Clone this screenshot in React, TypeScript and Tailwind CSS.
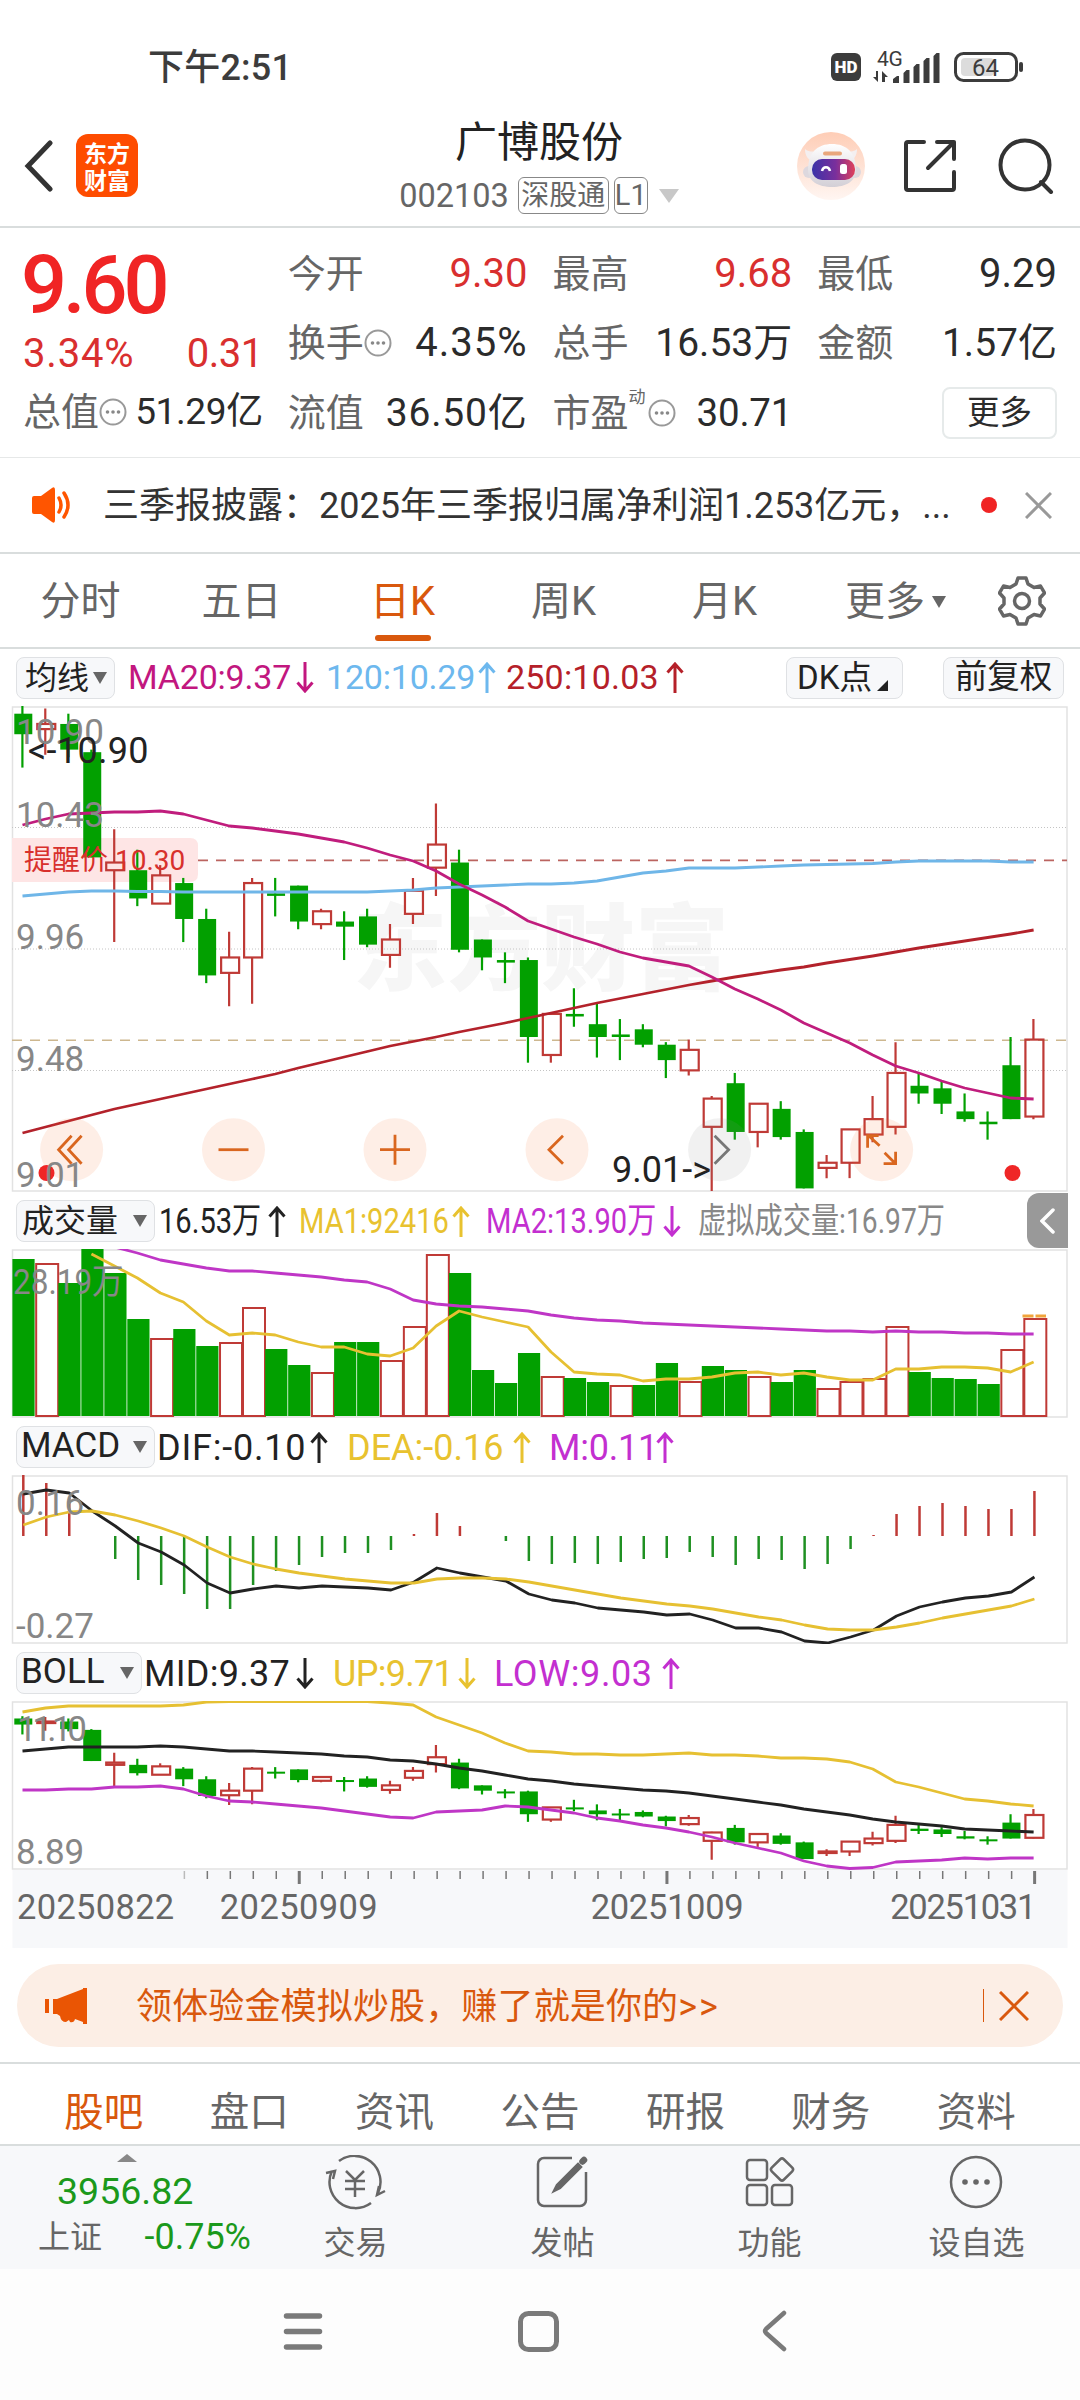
import type { ReactNode } from "react";
import clsx from "clsx";

const UP = "#bf3a36";
const DOWN = "#02a000";
const STEP = 22.98;

const xAt = (i: number) => 22.5 + i * STEP;

// open-side/close-side prices per day: [high, body top, body bottom, low, isUp]
const candles: [number, number, number, number, number][] = [
  [10.9, 10.87, 10.79, 10.66, 0],
  [10.89, 10.83, 10.81, 10.71, 1],
  [10.87, 10.83, 10.73, 10.7, 0],
  [10.73, 10.72, 10.31, 10.31, 0],
  [10.42, 10.29, 10.26, 9.98, 1],
  [10.34, 10.26, 10.15, 10.12, 0],
  [10.28, 10.24, 10.13, 10.13, 1],
  [10.23, 10.21, 10.07, 9.98, 0],
  [10.11, 10.07, 9.85, 9.82, 0],
  [10.02, 9.92, 9.86, 9.73, 1],
  [10.23, 10.21, 9.92, 9.74, 1],
  [10.23, 10.17, 10.16, 10.08, 0],
  [10.2, 10.2, 10.06, 10.03, 0],
  [10.11, 10.1, 10.05, 10.03, 1],
  [10.1, 10.06, 10.04, 9.91, 0],
  [10.11, 10.08, 9.97, 9.96, 0],
  [10.05, 9.99, 9.93, 9.88, 1],
  [10.23, 10.18, 10.09, 10.05, 1],
  [10.52, 10.36, 10.27, 10.16, 1],
  [10.34, 10.29, 9.95, 9.94, 0],
  [9.99, 9.99, 9.92, 9.87, 0],
  [9.94, 9.91, 9.9, 9.82, 0],
  [9.92, 9.91, 9.61, 9.51, 0],
  [9.7, 9.7, 9.54, 9.51, 1],
  [9.8, 9.7, 9.69, 9.65, 0],
  [9.74, 9.66, 9.61, 9.53, 0],
  [9.68, 9.62, 9.61, 9.52, 0],
  [9.66, 9.64, 9.58, 9.57, 0],
  [9.59, 9.58, 9.52, 9.45, 0],
  [9.6, 9.56, 9.48, 9.46, 1],
  [9.38, 9.37, 9.26, 9.01, 1],
  [9.47, 9.43, 9.24, 9.21, 0],
  [9.35, 9.35, 9.24, 9.18, 1],
  [9.36, 9.33, 9.22, 9.21, 0],
  [9.25, 9.24, 9.02, 9.02, 0],
  [9.15, 9.12, 9.1, 9.06, 1],
  [9.25, 9.25, 9.12, 9.06, 1],
  [9.38, 9.29, 9.23, 9.2, 1],
  [9.59, 9.47, 9.26, 9.23, 1],
  [9.47, 9.42, 9.39, 9.35, 0],
  [9.44, 9.41, 9.35, 9.31, 0],
  [9.39, 9.32, 9.29, 9.28, 0],
  [9.32, 9.28, 9.27, 9.21, 0],
  [9.61, 9.5, 9.29, 9.29, 0],
  [9.68, 9.6, 9.3, 9.29, 1],
];

// Bar heights and indicator lines, in chart pixels
const volumes = [157, 153, 133, 167, 143, 97, 78, 87, 70, 74, 109, 67, 51, 44, 74, 74, 56, 90, 162, 143, 46, 33, 63, 40, 38, 34, 31, 31, 53, 35, 50, 46, 40, 34, 46, 28, 35, 38, 90, 44, 38, 37, 32, 67, 98];
const macdBars = [61, 53, 38, 0, -23, -44, -49, -58, -73, -73, -49, -35, -29, -21, -17, -17, -14, 2, 23, 10, 0, -5, -25, -28, -27, -28, -26, -23, -22, -16, -21, -29, -23, -24, -33, -28, -13, 1, 22, 30, 33, 30, 27, 27, 45];

const ma20 = [119, 113, 108, 107, 106, 106, 105, 108, 114, 120, 122, 125, 128, 132, 136, 142, 149, 155, 165, 178, 189, 201, 215, 223, 231, 238, 246, 252, 256, 260, 271, 283, 293, 304, 317, 327, 337, 349, 360, 367, 375, 382, 387, 392, 393];
const ma120 = [190, 188, 186, 185, 185, 185.5, 185.5, 186, 186, 186, 186, 186, 186, 186, 186, 186, 185, 184, 182, 181, 180, 179, 178, 178, 177, 175, 171, 167, 165, 162, 162, 162, 161, 160, 159, 158.5, 158, 157.5, 156, 155, 155, 155, 155, 156, 156];
const ma250 = [427, 421, 415, 409, 403, 398, 393, 388, 383, 378, 373, 368, 362, 356.5, 351, 345.5, 340, 335.5, 331, 326, 321.5, 317, 312, 307, 302, 297, 292.5, 288, 283.5, 279, 275, 271, 267.5, 264, 261, 257, 253.5, 250, 246, 242, 238.5, 235, 231.5, 228, 224];

const volMa1 = [null, null, null, 5, 17, 29, 44, 53, 72, 86, 84, 86, 93, 98, 98, 105, 107, 99, 77, 62, 68, 73, 78, 103, 123, 125, 126, 132, 130, 130, 128, 124, 123, 126, 124, 128, 131, 131, 120, 120, 118, 118, 119, 123, 113];
const volMa2 = [null, null, null, null, -2, 4, 11, 15, 19, 22, 22, 24, 26, 28, 31, 33, 40, 51, 55, 57, 58, 60, 62, 66, 69, 71, 72, 74, 75, 76, 77, 78, 79, 80, 81, 82, 82, 83, 82, 83, 83, 84, 84, 85, 85];

const dif = [19, 15, 18, 36, 51, 68, 77, 90, 108, 118, 114, 111, 113, 111, 112, 113, 115, 107, 93, 98, 102, 106, 119, 125, 128, 133, 135, 137, 140, 139, 145, 153, 153, 157, 166, 168, 162, 155, 141, 132, 127, 123, 121, 117, 102];
const dea = [50, 42, 37, 36, 40, 46, 53, 61, 72, 82, 89, 94, 98, 101, 104, 106, 108, 108, 104, 103, 103, 104, 107, 111, 115, 119, 123, 126, 129, 131, 134, 138, 142, 145, 150, 154, 155, 155, 152, 148, 143, 139, 135, 131, 124];

const bollMid = [50, 48, 46, 46, 46, 46, 45, 46, 48, 50, 50, 51, 52, 53, 55, 56, 59, 60, 63, 67, 70, 74, 78, 80, 83, 85, 87, 89, 90, 92, 95, 98, 101, 104, 108, 111, 114, 118, 121, 123, 125, 128, 129, 130, 131];
const bollUp = [11, 7, 5, 5, 5, 5, 5, 4, 1, 0.5, 0.5, 0.5, 0.5, 0.5, 0.5, 0.5, 2, 4, 16, 24, 32, 42, 50, 51, 53, 53, 54, 54, 53, 52, 54, 54, 55, 57, 57, 58, 61, 68, 81, 86, 92, 98, 100, 103, 105];
const bollLow = [89, 89, 88, 88, 86, 86, 85, 88, 95, 100, 101, 103, 105, 107, 110, 113, 116, 117, 111, 110, 109, 105, 106, 109, 112, 117, 120, 124, 127, 131, 136, 142, 147, 152, 160, 165, 167.5, 166.5, 161, 160, 159, 157, 158, 157, 157];

const Line = ({ data, color, dx = 0 }: { data: (number | null)[]; color: string; dx?: number }) => (
  <polyline
    fill="none"
    stroke={color}
    strokeWidth="2.8"
    strokeLinejoin="round"
    points={data.map((y, i) => (y === null ? "" : `${xAt(i) + dx},${y}`)).join(" ").trim()}
  />
);

const Candles = ({ top, scale }: { top: number; scale: number }) => (
  <g>
    {candles.map(([h, a, b, l, up], i) => {
      const y = (p: number) => (top - p) * scale;
      const x = xAt(i);
      const height = y(b) - y(a);
      if (up) {
        return (
          <g key={i} stroke={UP} strokeWidth="2.2">
            <path d={`M${x - 0.2} ${y(h)}V${y(a)}M${x - 0.2} ${y(b)}V${y(l)}`} fill="none" />
            <rect x={x - 8.2} y={y(a)} width="18" height={Math.max(height, 1.5)} fill="none" />
          </g>
        );
      }
      return (
        <g key={i} fill={DOWN}>
          <rect x={x - 1.2} y={y(h)} width="2.2" height={y(l) - y(h)} />
          <rect x={x - 8.2} y={y(a)} width="18" height={Math.max(height, 2)} />
        </g>
      );
    })}
  </g>
);

const Frame = ({ height, children, id }: { height: number; children: ReactNode; id: string }) => (
  <svg className="block w-full" viewBox={`0 0 1080 ${height}`} height={height}>
    <clipPath id={id}>
      <rect x="12" y="0" width="1056" height={height} />
    </clipPath>
    <rect x="12.5" y="1" width="1054.5" height={height - 2} fill="none" stroke="#e2e2e2" strokeWidth="1.5" />
    <g clipPath={`url(#${id})`}>{children}</g>
  </svg>
);

const AxisText = ({ y, children }: { y: number; children: ReactNode }) => (
  <text x="16" y={y} fontSize="35" fill="#878787">
    {children}
  </text>
);

const Arrow = ({ down }: { down?: boolean }) => (
  <svg className={clsx("shrink-0", down && "rotate-180")} width="18" height="31" viewBox="0 0 18 31" fill="none" stroke="currentColor" strokeWidth="3">
    <path d="M9 31V2M1.500 10.500 9 2l7.500 8.500" />
  </svg>
);

const Chip = ({ children, className }: { children: ReactNode; className?: string }) => (
  <div className={clsx("flex h-[42px] shrink-0 items-center rounded-lg border border-[#dfe1e4] bg-[#f7f8fa] tracking-normal text-[#222]", className)}>
    {children}
  </div>
);

const Caret = ({ className }: { className?: string }) => (
  <svg className={clsx("shrink-0", className)} width="14" height="12" viewBox="0 0 14 12" fill="currentColor">
    <path d="M0 0h14L7 12z" />
  </svg>
);

// width is the distance to the next readout, the text itself is kept in textClass
const Readout = ({ text, down, className, textClass }: { text: string; down?: boolean; className: string; textClass: string }) => (
  <div className={clsx("flex shrink-0 items-center whitespace-nowrap", className)}>
    <span className={clsx("shrink-0", textClass)}>{text}</span>
    <Arrow down={down} />
  </div>
);

const Dots = () => (
  <svg width="28" height="28" viewBox="0 0 28 28" fill="none" stroke="#999" strokeWidth="2">
    <circle cx="14" cy="14" r="12.5" />
    <g fill="#888" stroke="none">
      <circle cx="8.5" cy="14" r="1.8" />
      <circle cx="14" cy="14" r="1.8" />
      <circle cx="19.5" cy="14" r="1.8" />
    </g>
  </svg>
);

interface QuoteProps {
  label: string;
  value: string;
  dots?: boolean;
  red?: boolean;
  sup?: string;
  size?: string;
}

const Quote = ({ label, value, dots, red, sup, size = "text-[40px]" }: QuoteProps) => (
  <div className="flex items-center justify-between whitespace-nowrap">
    <span className="flex items-center text-[#666]">
      {label}
      {sup && <sup className="-top-4 mr-0.5 text-[17px] leading-none">{sup}</sup>}
      {dots && <Dots />}
    </span>
    <span className={clsx(size, red ? "text-[#d92f2f]" : "text-[#2b2b2b]")}>{value}</span>
  </div>
);

const StatusBar = () => (
  <div className="flex h-[115px] items-center justify-between pr-[56px] pl-[148px] pt-[19px] text-[#3c3c3c]">
    <div className="pt-0.5 text-[36px] font-medium tracking-[0.2px]">下午2:51</div>
    <svg width="194" height="36" viewBox="0 0 194 36" fill="currentColor">
      <rect x="1" y="4" width="30" height="28" rx="6" />
      <text x="16" y="24" fontSize="17" fontWeight="900" fill="#fff" textAnchor="middle">HD</text>
      <text x="47" y="17" fontSize="21" letterSpacing="-0.3">4G</text>
      <path d="M48 22v11l-5-5h3v-6zM52 33V22l6 6h-3v5z" />
      <path d="M63 34v-4l4-3h2v7zM73.500 34V24l3-3h3v13zM83.500 34V18l3-3h3v19zM93.500 34V12l3-3h3v25zM103.500 34V7l3-3h3v30z" />
      <rect x="125.500" y="4.500" width="61" height="27" rx="8" fill="none" stroke="currentColor" strokeWidth="3" />
      <rect x="131" y="9" width="33" height="18" rx="4" fill="#dcdcdc" />
      <text x="155.500" y="26.500" fontSize="24" textAnchor="middle">64</text>
      <rect x="189" y="13" width="4" height="10" rx="2" />
    </svg>
  </div>
);

const Robot = () => (
  <svg width="68" height="68" viewBox="0 0 68 68">
    <defs>
      <linearGradient id="robot-bg" x2="0" y2="1">
        <stop stopColor="#fecdb6" />
        <stop offset="1" stopColor="#fff6f2" />
      </linearGradient>
      <linearGradient id="robot-visor">
        <stop stopColor="#3a33a8" />
        <stop offset=".55" stopColor="#7a2f9c" />
        <stop offset="1" stopColor="#e0405a" />
      </linearGradient>
      <linearGradient id="robot-head" x2="0" y2="1">
        <stop stopColor="#fff" />
        <stop offset="1" stopColor="#d3cfd6" />
      </linearGradient>
    </defs>
    <circle cx="34" cy="34" r="34" fill="url(#robot-bg)" />
    <path d="M8 17c0 7 3 10 7 12l8-10c-7 1-12 1-15-2zM60 17c0 7-3 10-7 12l-8-10c7 1 12 1 15-2z" fill="#f4eff0" />
    <circle cx="12" cy="40" r="6" fill="#ddd8de" />
    <circle cx="58" cy="40" r="6" fill="#ddd8de" />
    <path d="M11 38c0-18 10-26 24-26s24 8 24 26c0 11-10 17-24 17s-24-6-24-17z" fill="url(#robot-head)" />
    <rect x="26" y="19.500" width="19" height="4" rx="2" fill="#e9a77c" />
    <rect x="15" y="27" width="43" height="21" rx="10" fill="url(#robot-visor)" />
    <path d="M25 39c1-5 7-5 8 0" fill="none" stroke="#fff" strokeWidth="2.500" />
    <rect x="43" y="32" width="7" height="10" rx="2.500" fill="#fff" />
  </svg>
);

const Header = () => (
  <header className="flex h-[113px] items-start justify-between border-b-2 border-[#d9dddd] pr-[26px] pl-6">
    <div className="flex w-[300px] items-center gap-[23px] pt-[19px]">
      <svg width="29" height="52" viewBox="0 0 29 52" fill="none" stroke="#333" strokeWidth="5" strokeLinecap="round">
        <path d="M26 3 4 26l22 23" />
      </svg>
      <div className="flex h-[63px] w-[62px] flex-col items-center justify-center rounded-xl bg-[#fe4c00] font-['Noto_Sans_CJK_SC',sans-serif] text-[23px] leading-[27px] font-bold text-white">
        <span>东方</span>
        <span>财富</span>
      </div>
    </div>
    <div className="flex flex-col items-center pt-[3px]">
      <h1 className="text-[42px] leading-[50px] text-[#222]">广博股份</h1>
      <div className="mt-[9px] flex items-center gap-[5px] text-[#666]">
        <span className="mr-1 text-[32.5px] leading-9">002103</span>
        <span className="flex h-[37px] w-[91px] items-center justify-center rounded-md border-[1.5px] border-[#888] text-[28px]">深股通</span>
        <span className="flex h-[37px] w-[34px] items-center justify-center rounded-md border-[1.5px] border-[#888] text-[29px]">L1</span>
        <svg className="ml-1.5" width="20" height="14" viewBox="0 0 20 14" fill="#c8c8c8">
          <path d="M0 0h20L10 14z" />
        </svg>
      </div>
    </div>
    <div className="flex w-[300px] items-center justify-end pt-[17px]">
      <Robot />
      <svg className="ml-[38px]" width="54" height="54" viewBox="0 0 54 54" fill="none" stroke="#333" strokeWidth="4" strokeLinecap="round" strokeLinejoin="round">
        <path d="M21 3H5a2 2 0 0 0-2 2v44a2 2 0 0 0 2 2h44a2 2 0 0 0 2-2V33M34 3h17v17M51 3 25 29" />
      </svg>
      <svg className="ml-[41px]" width="56" height="56" viewBox="0 0 56 56" fill="none" stroke="#333" strokeWidth="4" strokeLinecap="round">
        <circle cx="27" cy="27" r="24.500" />
        <path d="m43 44 10 10" />
      </svg>
    </div>
  </header>
);

const Quotes = () => (
  <section className="grid h-[230px] grid-cols-4 gap-x-[25px] border-b border-[#e6e8e8] pt-3 pr-[23px] pl-[23px] text-[38px]">
    <div className="flex flex-col">
      <div className="-ml-0.5 flex h-[91px] items-center text-[81px] leading-none font-medium tracking-[-4px] text-[#f02424]">9.60</div>
      <div className="flex h-[46px] items-center justify-between text-[40px] text-[#d92f2f]">
        <span className="tracking-[0.8px]">3.34%</span>
        <span className="tracking-[-0.5px]">0.31</span>
      </div>
      <div className="flex h-[70px] flex-col justify-center">
        <Quote label="总值" value="51.29亿" dots size="text-[37px] tracking-[-0.4px]" />
      </div>
    </div>
    <div className="grid grid-rows-[68px_70px_70px]">
      <Quote label="今开" value="9.30" red />
      <Quote label="换手" value="4.35%" dots size="text-[40px] tracking-[1px]" />
      <Quote label="流值" value="36.50亿" size="text-[39px] tracking-[0.8px]" />
    </div>
    <div className="grid grid-rows-[68px_70px_70px]">
      <Quote label="最高" value="9.68" red />
      <Quote label="总手" value="16.53万" size="text-[39px]" />
      <Quote label="市盈" value="30.71" sup="动" dots size="text-[38.5px] tracking-[-0.2px]" />
    </div>
    <div className="grid grid-rows-[68px_70px_70px]">
      <Quote label="最低" value="9.29" />
      <Quote label="金额" value="1.57亿" size="text-[39px]" />
      <button className="h-[52px] w-[115px] self-center justify-self-end rounded-lg border-2 border-[#e6eaea] text-[32.5px] leading-[46px] text-[#2b2b2b]">更多</button>
    </div>
  </section>
);

const News = () => (
  <section className="flex h-[96px] items-center border-b-2 border-[#d9dddd] pr-7 pl-8 text-[36px] text-[#333]">
    <svg width="40" height="36" viewBox="0 0 40 36" fill="#ff5500">
      <path d="M2 9h7L20 1q3-2 3 2v30q0 4-3 2L9 27H2q-2 0-2-2V11q0-2 2-2z" />
      <path d="M27 11q4 7 0 14M32 6q8 12 0 24" fill="none" stroke="#ff5500" strokeWidth="3.500" strokeLinecap="round" />
    </svg>
    <p className="ml-[31px] w-[846px] pt-0.5 whitespace-nowrap">三季报披露：2025年三季报归属净利润1.253亿元，...</p>
    <span className="ml-8 size-4 rounded-full bg-[#f02424]" />
    <svg className="ml-7" width="27" height="27" viewBox="0 0 27 27" stroke="#999" strokeWidth="3">
      <path d="m1 1 25 25M26 1 1 26" />
    </svg>
  </section>
);

const periods = ["分时", "五日", "日K", "周K", "月K"];

const PeriodTabs = () => (
  <nav className="flex h-[95px] items-center border-b-2 border-[#d9dddd] text-[40px] text-[#666]">
    {periods.map((p) => (
      <div key={p} className={clsx("flex h-full w-[161px] flex-col items-center pt-[22px]", p === "日K" && "text-[#d9580d]")}>
        <span className="leading-[52px]">{p}</span>
        {p === "日K" && <span className="mt-[7px] h-[6px] w-[56px] rounded-full bg-[#d9580d]" />}
      </div>
    ))}
    <div className="ml-[40px] flex items-center pt-0.5">
      更多
      <Caret className="ml-[7px]" />
    </div>
    <svg className="ml-[52px]" width="48" height="50" viewBox="0 0 48 50" fill="none" stroke="#666" strokeWidth="3.500" strokeLinejoin="round">
      <path d="M20 2h8l2 6 6 3.500 6.500-1.500 4 7-4.500 5v6l4.500 5-4 7-6.500-1.500L30 42l-2 6h-8l-2-6-6-3.500L5.500 40l-4-7L6 28v-6l-4.500-5 4-7 6.500 1.500L18 8z" />
      <circle cx="24" cy="25" r="7.500" />
    </svg>
  </nav>
);

const roundButtons: { x: number; d: string; grey?: boolean }[] = [
  { x: 71.6, d: "M0-14-13 0 0 14M10-14-3 0 10 14" },
  { x: 233.5, d: "M-15 0H15" },
  { x: 395, d: "M-15 0H15M0-15V15" },
  { x: 557, d: "M6-14-8 0 6 14" },
  { x: 719.6, d: "M-5-14 9 0-5 14", grey: true },
  { x: 881.6, d: "M-2-4-13-14M-14-2V-14H-3M3 3 14 14M14 2V14H2" },
];

const MainChart = () => (
  <>
    <div className="flex h-[57px] items-center pr-4 pl-4 text-[34px] tracking-[-0.2px]">
      <Chip className="w-[99px] pl-[8px] text-[32px]">
        均线
        <Caret className="ml-1 text-[#666]" />
      </Chip>
      <Readout text="MA20:9.37" down className="ml-[13px] w-[198px] text-[#c2177f]" textClass="w-[168px]" />
      <Readout text="120:10.29" className="w-[180px] text-[#6db8ee]" textClass="w-[152px]" />
      <Readout text="250:10.03" className="w-[181px] text-[#b52029]" textClass="w-[160px] tracking-[0.2px]" />
      <Chip className="ml-auto w-[117px] pl-[10px] text-[33px]">
        DK点
        <svg className="mt-4 ml-[5px]" width="11" height="11" fill="#222">
          <path d="M11 0v11H0z" />
        </svg>
      </Chip>
      <Chip className="ml-[40px] w-[121px] justify-center text-[32.500px]">前复权</Chip>
    </div>
    <Frame height={486} id="clip-main">
      <text x="541" y="277" fontSize="94" fontWeight="900" fill="#f6f6f6" textAnchor="middle">东方财富</text>
      <g stroke="#c4c4c4" strokeDasharray="1 2">
        <path d="M12 121.500H1067M12 243H1067M12 364.500H1067" />
      </g>
      <path d="M12 132h178q8 0 8 8v28q0 8-8 8H12z" fill="#fee5e5" />
      <path d="M198 154.300H1067" stroke="#bb6460" strokeWidth="1.800" strokeDasharray="10 8" />
      <path d="M12 334.300H1067" stroke="#cdb78f" strokeWidth="1.500" strokeDasharray="10 8" />
      <Candles top={10.9} scale={256.6} />
      <Line data={ma250} color="#b3222b" />
      <Line data={ma120} color="#6fb6e8" />
      <Line data={ma20} color="#c01d7d" />
      {roundButtons.map(({ x, d, grey }) => (
        <g key={x} transform={`translate(${x} 443.700)`}>
          <circle r="31.500" fill={grey ? "#888" : "#f9742f"} opacity="0.12" />
          <path d={d} fill="none" stroke={grey ? "#777" : "#d9661f"} strokeWidth="2.800" />
        </g>
      ))}
      <circle cx="46.500" cy="467" r="8" fill="#ef2626" />
      <circle cx="1012.500" cy="467" r="8" fill="#ef2626" />
      <AxisText y={38}>10.90</AxisText>
      <AxisText y={121}>10.43</AxisText>
      <AxisText y={243}>9.96</AxisText>
      <AxisText y={365}>9.48</AxisText>
      <AxisText y={481}>9.01</AxisText>
      <text x="28" y="57" fontSize="36" fill="#222" letterSpacing="0.300">{"<-10.90"}</text>
      <text x="711" y="476" fontSize="36" fill="#222" textAnchor="end">{"9.01->"}</text>
      <text x="24" y="164" fontSize="28" fill="#d8302c">提醒价 10.30</text>
    </Frame>
  </>
);

const VolumeChart = () => (
  <>
    <div className="flex h-[57px] items-center pl-4 text-[35.500px]">
      <Chip className="w-[139px] pl-[5px] text-[32px]">
        成交量
        <Caret className="mr-[7px] ml-auto text-[#666]" />
      </Chip>
      <Readout text="16.53万" className="ml-[4px] w-[140px] pt-0.5 text-[#222]" textClass="w-[109px] origin-left scale-x-[.82]" />
      <Readout text="MA1:92416" className="w-[187px] pt-0.5 text-[#e8c22f]" textClass="w-[153px] origin-left scale-x-[.82]" />
      <Readout text="MA2:13.90万" down className="w-[212px] pt-0.5 text-[#c32fd0]" textClass="w-[177px] origin-left scale-x-[.82]" />
      <div className="w-[260px] origin-left scale-x-[.795] pt-0.5 whitespace-nowrap text-[#888]">虚拟成交量:16.97万</div>
      <div className="mr-[12px] ml-auto flex h-[55px] w-[41px] items-center justify-center rounded-l-xl bg-[#999]">
        <svg width="15" height="26" viewBox="0 0 15 26" fill="none" stroke="#fff" strokeWidth="3.500" strokeLinecap="round">
          <path d="M13 2 2 13l11 11" />
        </svg>
      </div>
    </div>
    <Frame height={169} id="clip-vol">
      {volumes.map((v, i) => {
        const close = candles[i][4] ? candles[i][1] : candles[i][2];
        const prev = i > 0 ? (candles[i - 1][4] ? candles[i - 1][1] : candles[i - 1][2]) : Infinity;
        const x = 12.4 + i * STEP;
        return close >= prev ? (
          <rect key={i} x={x + 0.8} y={168 - v} width="22" height={v - 1} fill="#fff" stroke={UP} strokeWidth="2" />
        ) : (
          <rect key={i} x={x} y={167 - v} width="22.200" height={v} fill={DOWN} />
        );
      })}
      <path d="M1022.500 67H1046" stroke="#f0a43a" strokeWidth="3" strokeDasharray="11 2" />
      <Line data={volMa2} color="#bf36c6" />
      <Line data={volMa1} color="#e6c032" />
      <text transform="translate(13 45) scale(.9 1)" fontSize="35" fill="#878787">28.19万</text>
    </Frame>
  </>
);

const MacdChart = () => (
  <>
    <div className="flex h-[57px] items-center pl-4 text-[36px]">
      <Chip className="w-[139px] pl-[4px] text-[35px]">
        MACD
        <Caret className="mr-[7px] ml-auto text-[#666]" />
      </Chip>
      <Readout text="DIF:-0.10" className="ml-[2px] w-[190px] pt-0.5 text-[#222]" textClass="w-[153px] tracking-[0.8px]" />
      <Readout text="DEA:-0.16" className="w-[202px] pt-0.5 text-[#e8c22f]" textClass="w-[166px]" />
      <Readout text="M:0.11" className="pt-0.5 text-[#c32fd0]" textClass="w-[107px] tracking-[-0.2px]" />
    </div>
    <Frame height={169} id="clip-macd">
      {macdBars.map((v, i) => (
        <path key={i} d={`M${xAt(i) + 0.8} 61v${-v}`} stroke={v > 0 ? UP : "#1f9022"} strokeWidth="2.500" />
      ))}
      <Line data={dif} color="#222" dx={0.8} />
      <Line data={dea} color="#e6c032" dx={0.8} />
      <AxisText y={40}>0.16</AxisText>
      <AxisText y={163}>-0.27</AxisText>
    </Frame>
  </>
);

const BollChart = () => (
  <>
    <div className="flex h-[57px] items-center pl-4 text-[36px]">
      <Chip className="w-[126px] pl-[4px] text-[35px]">
        BOLL
        <Caret className="mr-[7px] ml-auto text-[#666]" />
      </Chip>
      <Readout text="MID:9.37" down className="ml-[2px] w-[189px] pt-0.5 text-[#222]" textClass="w-[152px] tracking-[0.3px]" />
      <Readout text="UP:9.71" down className="w-[161px] pt-0.5 text-[#e8c22f]" textClass="w-[125px] tracking-[-0.7px]" />
      <Readout text="LOW:9.03" className="pt-0.5 text-[#c32fd0]" textClass="w-[168px] tracking-[0.6px]" />
    </div>
    <Frame height={169} id="clip-boll">
      <Candles top={11.1} scale={76} />
      <Line data={bollUp} color="#e6c032" />
      <Line data={bollMid} color="#222" />
      <Line data={bollLow} color="#bf36c6" />
      <text x="17" y="40" fontSize="35" fill="#878787" letterSpacing="-4.500">11.10</text>
      <AxisText y={163}>8.89</AxisText>
    </Frame>
    <svg className="block w-full" height="78" viewBox="0 0 1080 78">
      <rect x="12.500" width="1055" height="78" fill="#f7f8fa" />
      {candles.map((_, i) => {
        const major = i === 12 || i === 28 || i === 44;
        if (i < 7) return null;
        return <path key={i} d={`M${xAt(i) + 1} 1v${major ? 13 : 8}`} stroke={i === 7 ? "#bbb" : "#777"} strokeWidth={major ? 3 : 1.5} />;
      })}
      <g fontSize="34.500" fill="#666">
        <text x="17" y="49" letterSpacing="0.300">20250822</text>
        <text x="299" y="49" textAnchor="middle" letterSpacing="0.400">20250909</text>
        <text x="667" y="49" textAnchor="middle" letterSpacing="-0.300">20251009</text>
        <text x="1035" y="49" textAnchor="end" letterSpacing="-1.300">20251031</text>
      </g>
    </svg>
  </>
);

const Banner = () => (
  <div className="mx-[17px] mt-4 flex h-[83px] items-center rounded-full bg-[#fceee5] pr-[34px] pl-7 text-[36px] text-[#d9580d]">
    <svg width="42" height="36" viewBox="0 0 42 36" fill="#ea5504">
      <path d="M0 11h4v14H0zM8 11h4L38 1V0h4v36h-4v-2l-8-3q-1 4-5 3l-1-2-3 2q-5 0-6-6l-3-2H8z" />
    </svg>
    <span className="ml-[49px] pt-0.5 tracking-[0.15px]">
      领体验金模拟炒股，赚了就是你的<span className="tracking-[2px]">&gt;&gt;</span>
    </span>
    <span className="ml-auto h-[33px] w-px bg-[#d9580d]" />
    <svg className="ml-[15px]" width="30" height="30" viewBox="0 0 30 30" stroke="#d9580d" strokeWidth="3">
      <path d="m1 1 28 28M29 1 1 29" />
    </svg>
  </div>
);

const infoTabs = ["股吧", "盘口", "资讯", "公告", "研报", "财务", "资料"];

const InfoTabs = () => (
  <nav className="mt-[15px] flex h-[84px] items-center border-y-2 border-[#d9dddd] px-[31px] pt-[18px] text-[39.500px] text-[#666]">
    {infoTabs.map((t) => (
      <span key={t} className={clsx("w-[145.500px] text-center", t === "股吧" && "text-[#d9580d]")}>
        {t}
      </span>
    ))}
  </nav>
);

const actions = [
  {
    label: "交易",
    icon: (
      <>
        <path d="M14 6A26 26 0 0 1 53 38M46 48A26 26 0 0 1 7 16M1 18l9-2-2 8M60 36l-8 4 2-9" />
        <path d="m21 16 9 9 9-9M30 25v17M20 26h20M20 34h20" />
      </>
    ),
  },
  {
    label: "发帖",
    icon: (
      <>
        <path d="M40 3H12a6 6 0 0 0-6 6v36a6 6 0 0 0 6 6h36a6 6 0 0 0 6-6V17" />
        <path d="m46 9 3 3-21 21-6 3 3-6z" fill="currentColor" />
        <path d="m50.500 6.500 1.500-1.500" strokeWidth="6.500" strokeLinecap="round" />
      </>
    ),
  },
  {
    label: "功能",
    icon: (
      <>
        <rect x="8" y="5" width="20" height="20" rx="3" />
        <rect x="8" y="30" width="20" height="20" rx="3" />
        <rect x="33" y="30" width="20" height="20" rx="3" />
        <rect x="34.500" y="6" width="17" height="17" rx="2.500" transform="rotate(45 43 14.500)" />
      </>
    ),
  },
  {
    label: "设自选",
    icon: (
      <>
        <circle cx="30" cy="27" r="25" />
        <g fill="currentColor" stroke="none">
          <circle cx="19" cy="27" r="2.800" />
          <circle cx="30" cy="27" r="2.800" />
          <circle cx="41" cy="27" r="2.800" />
        </g>
      </>
    ),
  },
];

const BottomBar = () => (
  <footer className="flex h-[123px] bg-[#f7f8fa]">
    <div className="flex w-[252px] flex-col pt-[8px] text-[#1b991b]">
      <svg className="ml-[117px]" width="20" height="8" fill="#888">
        <path d="M10 0 20 8H0z" />
      </svg>
      <span className="ml-[57px] text-[37.500px] leading-[58px]">3956.82</span>
      <div className="flex items-center justify-between pr-px pl-[38px] leading-[34px]">
        <span className="text-[32px] text-[#666]">上证</span>
        <span className="text-[36px]">-0.75%</span>
      </div>
    </div>
    {actions.map(({ label, icon }) => (
      <div key={label} className="flex w-[207px] flex-col items-center pt-[9px] text-[32px] text-[#666]">
        <svg width="62" height="56" viewBox="0 0 62 56" fill="none" stroke="currentColor" strokeWidth="2.500">
          {icon}
        </svg>
        <span className="mt-3 leading-10">{label}</span>
      </div>
    ))}
  </footer>
);

const SystemNav = () => (
  <div className="flex h-[131px] bg-[#fdfdfd] pt-[40px] pl-[283px]">
    <svg width="40" height="44" viewBox="0 0 40 44" stroke="#7a7a7a" strokeWidth="5.500" strokeLinecap="round">
      <path d="M3.500 7h33M3.500 22.500h33M3.500 38h33" />
    </svg>
    <svg className="ml-[193px]" width="44" height="44" viewBox="0 0 44 44" fill="none" stroke="#7a7a7a" strokeWidth="5">
      <rect x="4.500" y="4.500" width="36" height="36" rx="8" />
    </svg>
    <svg className="ml-[201px]" width="26" height="44" viewBox="0 0 26 44" fill="none" stroke="#7a7a7a" strokeWidth="4.500" strokeLinecap="round" strokeLinejoin="round">
      <path d="M23 4 5 20q-2 2 0 4l18 16" />
    </svg>
  </div>
);

export default function App() {
  return (
    <div lang="zh-CN" className="h-[2400px] w-[1080px] overflow-hidden bg-white font-['Roboto','Noto_Sans_CJK_SC',sans-serif]">
      <StatusBar />
      <Header />
      <Quotes />
      <News />
      <PeriodTabs />
      <MainChart />
      <VolumeChart />
      <MacdChart />
      <BollChart />
      <Banner />
      <InfoTabs />
      <BottomBar />
      <SystemNav />
    </div>
  );
}
